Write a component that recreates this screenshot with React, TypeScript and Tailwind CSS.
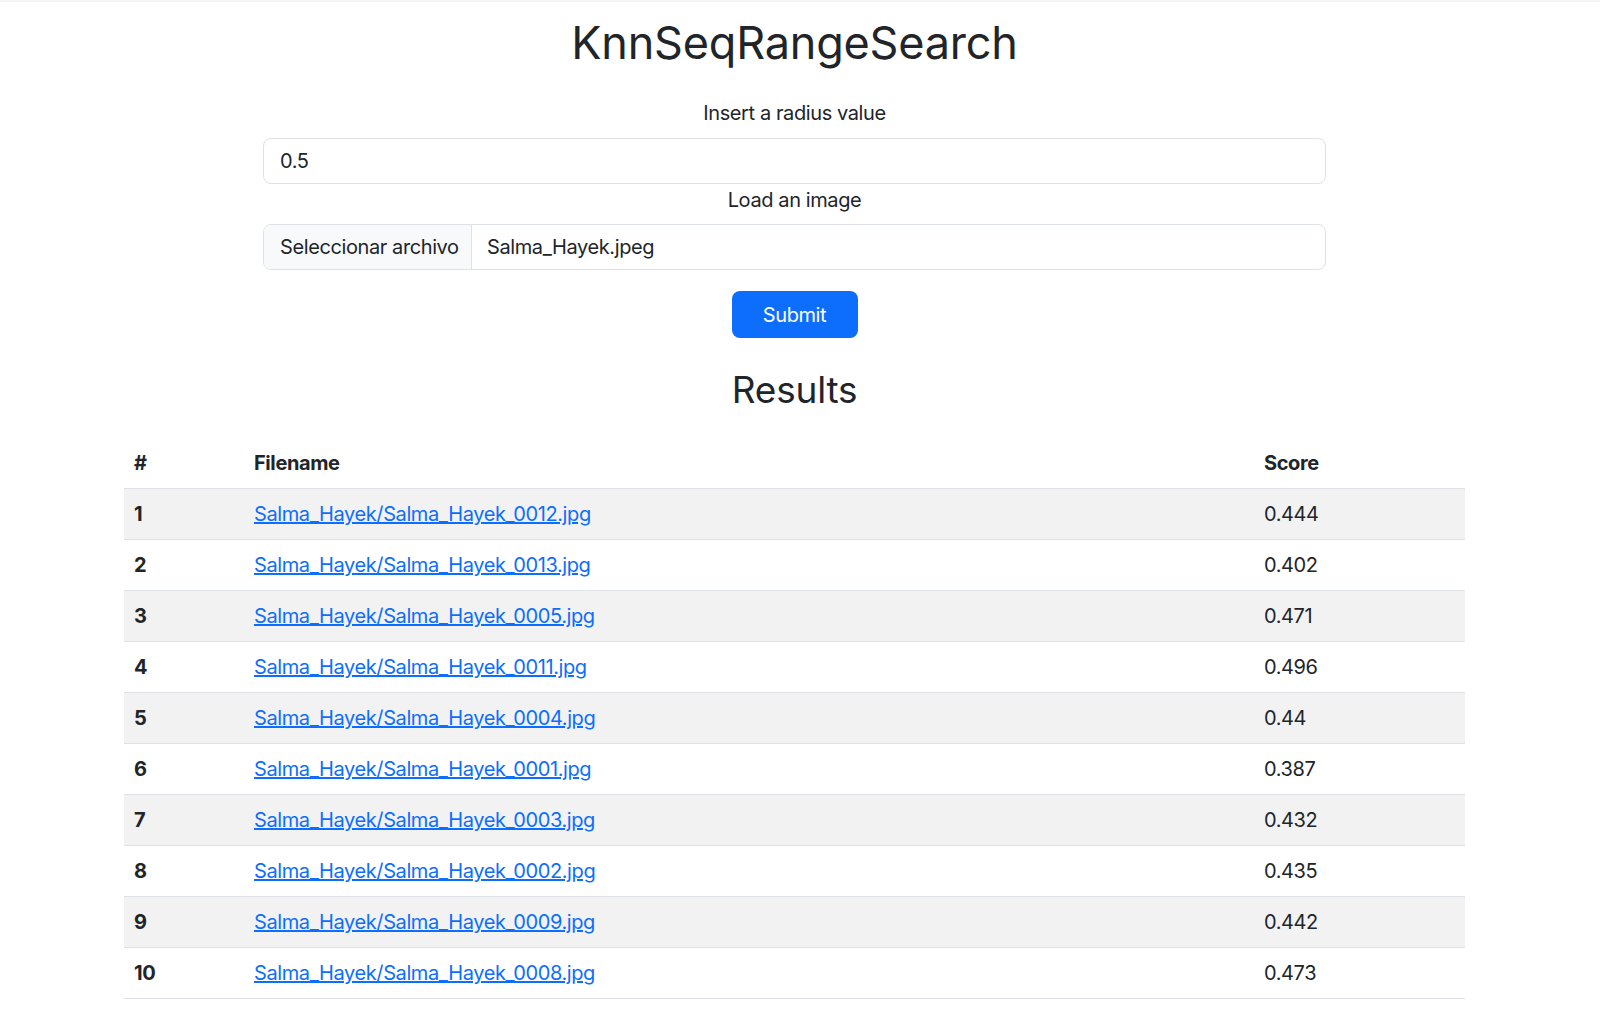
import React from "react";

const rows: [number, string, string][] = [
  [1, "Salma_Hayek/Salma_Hayek_0012.jpg", "0.444"],
  [2, "Salma_Hayek/Salma_Hayek_0013.jpg", "0.402"],
  [3, "Salma_Hayek/Salma_Hayek_0005.jpg", "0.471"],
  [4, "Salma_Hayek/Salma_Hayek_0011.jpg", "0.496"],
  [5, "Salma_Hayek/Salma_Hayek_0004.jpg", "0.44"],
  [6, "Salma_Hayek/Salma_Hayek_0001.jpg", "0.387"],
  [7, "Salma_Hayek/Salma_Hayek_0003.jpg", "0.432"],
  [8, "Salma_Hayek/Salma_Hayek_0002.jpg", "0.435"],
  [9, "Salma_Hayek/Salma_Hayek_0009.jpg", "0.442"],
  [10, "Salma_Hayek/Salma_Hayek_0008.jpg", "0.473"],
];

export default function App() {
  return (
    <div
      className="min-h-[1012px] bg-white text-[#212529] text-[20px] leading-[30px] tracking-[-0.4px]"
      style={{ fontFamily: 'Inter, "Liberation Sans", sans-serif' }}
    >
      <div className="h-[2px] bg-[#f4f5f7]" />
      <div className="w-[1589px] flex flex-col items-center">
        <h1 className="mt-[14px] text-[45px] leading-[54px] font-normal tracking-[-0.2px]">KnnSeqRangeSearch</h1>
        <form className="mt-[28px] w-[1063px] flex flex-col items-center" onSubmit={(e) => e.preventDefault()}>
          <label className="block mb-[10px]">Insert a radius value</label>
          <input
            className="w-full h-[46px] px-[16px] border border-[#dee2e6] rounded-[8px] outline-none text-[20px] tracking-[-0.4px]"
            defaultValue="0.5"
          />
          <label className="block mt-[1px] mb-[9px]">Load an image</label>
          <div className="w-full h-[46px] flex border border-[#dee2e6] rounded-[8px] overflow-hidden">
            <div className="w-[208px] shrink-0 pl-[16px] flex items-center bg-[#f8f9fa] border-r border-[#dee2e6]">
              Seleccionar archivo
            </div>
            <div className="px-[15px] flex items-center">Salma_Hayek.jpeg</div>
          </div>
          <button
            type="submit"
            className="mt-[21px] w-[126px] h-[47px] rounded-[8px] bg-[#0d6efd] text-white text-[20px] tracking-[-0.4px]"
          >
            Submit
          </button>
        </form>
        <h3 className="mt-[30px] text-[37px] leading-[44px] font-normal tracking-[-0.2px]">Results</h3>
        <table className="mt-[26px] w-[1341px] border-collapse text-left">
          <thead>
            <tr className="border-b border-[#dee2e6]">
              <th className="w-[120px] px-[10px] py-[10px] font-bold">#</th>
              <th className="w-[1010px] px-[10px] py-[10px] font-bold">Filename</th>
              <th className="px-[10px] py-[10px] font-bold">Score</th>
            </tr>
          </thead>
          <tbody>
            {rows.map(([n, f, s]) => (
              <tr key={n} className={`border-b border-[#dee2e6] ${n % 2 === 1 ? "bg-[#f2f2f2]" : "bg-white"}`}>
                <th className="px-[10px] py-[10px] font-bold">{n}</th>
                <td className="px-[10px] py-[10px]">
                  <a href="#" className="text-[#0d6efd] underline">
                    {f}
                  </a>
                </td>
                <td className="px-[10px] py-[10px]">{s}</td>
              </tr>
            ))}
          </tbody>
        </table>
      </div>
    </div>
  );
}
